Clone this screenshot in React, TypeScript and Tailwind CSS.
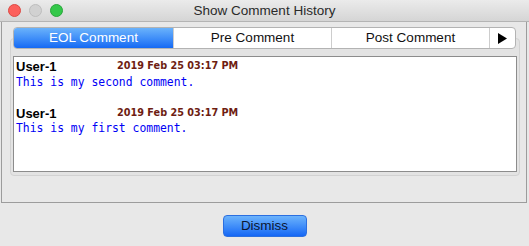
import React from "react";

const comments = [
  { user: "User-1", date: "2019 Feb 25 03:17 PM", text: "This is my second comment." },
  { user: "User-1", date: "2019 Feb 25 03:17 PM", text: "This is my first comment." },
];

const tabs = ["EOL Comment", "Pre Comment", "Post Comment"];

const TrafficLights = () => (
  <div className="flex items-center gap-[8px] pl-[8px]">
    <span className="w-[13px] h-[13px] rounded-full bg-[#fc605c] border border-[#dc4a44]" />
    <span className="w-[13px] h-[13px] rounded-full bg-[#d1d1d1] border border-[#bdbdbd]" />
    <span className="w-[13px] h-[13px] rounded-full bg-[#34c84a] border border-[#29a63b]" />
  </div>
);

export default function App() {
  return (
    <div className="w-[529px] h-[246px] bg-[#e8e8e8] flex flex-col font-['Liberation_Sans',Arial,sans-serif] overflow-hidden">
      {/* title bar */}
      <div className="h-[22px] shrink-0 grid grid-cols-[1fr_auto_1fr] items-center bg-gradient-to-b from-[#ebebeb] to-[#d5d5d5] border-b border-[#b4b4b4]">
        <TrafficLights />
        <span className="text-[13.5px] text-[#2a2a2a] leading-none">Show Comment History</span>
        <span />
      </div>

      {/* outer panel */}
      <div className="ml-[1px] w-[526px] h-[181px] shrink-0 border-x border-b border-[#9c9c9c] pt-[5px]">
        <div className="relative z-10 ml-[11px] w-[503px] h-[22px] flex rounded-[4px] border border-[#b3b3b3] bg-white overflow-hidden text-[13.5px] leading-none">
          {tabs.map((t, i) => (
            <div
              key={t}
              className={
                i === 0
                  ? "w-[159px] flex items-center justify-center text-white bg-gradient-to-b from-[#6ab2fb] to-[#1469f4]"
                  : "w-[158px] flex items-center justify-center text-[#111] border-l border-[#cdcdcd]"
              }
            >
              {t}
            </div>
          ))}
          <div className="flex-1 flex items-center justify-center border-l border-[#cdcdcd]">
            <svg width="9" height="11" viewBox="0 0 9 11">
              <path d="M0 0 L9 5.5 L0 11 Z" fill="#000" />
            </svg>
          </div>
        </div>

        <div className="-mt-[11px] ml-[8px] w-[510px] h-[138px] rounded-[4px] border border-[#d2d2d2] bg-[#e3e3e3] pt-[17px] px-[2px]">
          <div className="h-[116px] bg-white border border-[#8c8c8c] pl-[2px] pt-[2px]">
            {comments.map((c, i) => (
              <div key={i} className={i > 0 ? "mt-[15.5px]" : ""}>
                <div className="h-[15.5px] flex items-center">
                  <span className="w-[101px] text-[13px] font-bold text-black">{c.user}</span>
                  <span className="text-[9.7px] font-bold text-[#6e1d12] font-['DejaVu_Sans',sans-serif]">{c.date}</span>
                </div>
                <div className="h-[15.5px] flex items-center text-[11.4px] text-[#0000f5] font-['DejaVu_Sans_Mono',monospace]">
                  {c.text}
                </div>
              </div>
            ))}
          </div>
        </div>
      </div>

      {/* footer */}
      <div className="flex justify-center pt-[12px]">
        <button className="w-[84px] h-[22px] rounded-[4px] border border-[#2b6fe0] bg-gradient-to-b from-[#6cb3fb] to-[#1466f5] text-[13.5px] text-[#0b1733] leading-none">
          Dismiss
        </button>
      </div>
    </div>
  );
}
